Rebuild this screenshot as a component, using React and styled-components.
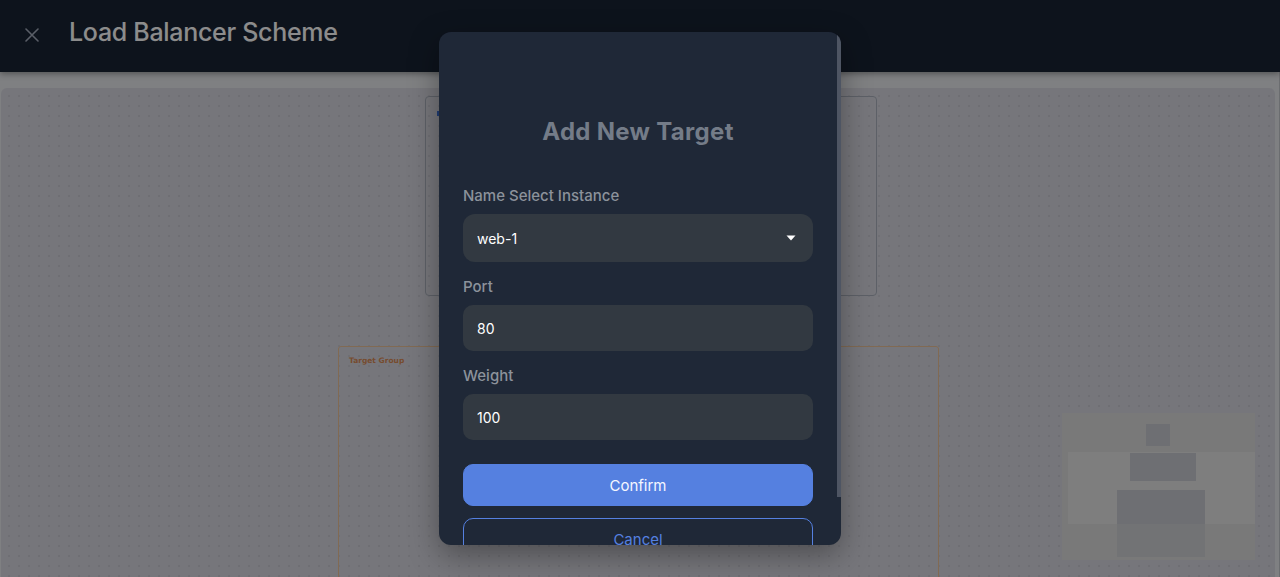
import styled, { createGlobalStyle } from 'styled-components';

const GlobalStyle = createGlobalStyle`
  html, body {
    margin: 0;
    padding: 0;
    height: 100%;
    overflow: hidden;
  }
  body {
    font-family: Inter, "Noto Sans", "Liberation Sans", sans-serif;
    background: #e7e9ed;
  }
  #root {
    height: 100%;
  }
`;

const targets = [
  { label: 'Port', value: '80' },
  { label: 'Weight', value: '100' },
];

const App = () => {
  return (
    <Page>
      <GlobalStyle />
      <Header>
        <CloseButton aria-label="close">
          <svg width="14" height="14" viewBox="0 0 14 14">
            <path d="M1 1 L13 13 M13 1 L1 13" stroke="currentColor" strokeWidth="1.6" strokeLinecap="round" />
          </svg>
        </CloseButton>
        <Title>Load Balancer Scheme</Title>
      </Header>

      <Main>
        <Canvas>
          <Node x={424} y={8} w={452} h={200}>
            <NodeMark />
          </Node>
          <Group x={337} y={258} w={601} h={260}>
            <GroupLabel>Target Group</GroupLabel>
          </Group>

          <MiniMap>
            <MiniBand />
            <MiniBox x={84} y={11} w={24} h={22} />
            <MiniBox x={68} y={40} w={66} h={28} />
            <MiniBox x={55} y={77} w={88} h={34} />
            <MiniBox x={55} y={111} w={88} h={33} light />
          </MiniMap>
        </Canvas>
      </Main>

      <Overlay>
        <Modal>
          <ModalBody>
            <ModalTitle>Add New Target</ModalTitle>

            <Field>
              <Label>Name Select Instance</Label>
              <Select>
                <span>web-1</span>
                <svg width="10" height="6" viewBox="0 0 10 6">
                  <path d="M0.5 0.5 L9.5 0.5 L5 5.5 Z" fill="#ffffff" />
                </svg>
              </Select>
            </Field>

            {targets.map((t) => (
              <Field key={t.label}>
                <Label>{t.label}</Label>
                <Input defaultValue={t.value} />
              </Field>
            ))}

            <Actions>
              <Button primary>Confirm</Button>
              <Button>Cancel</Button>
            </Actions>
          </ModalBody>
          <ScrollThumb />
        </Modal>
      </Overlay>
    </Page>
  );
};

export default App;

const Page = styled.div`
  position: relative;
  height: 100vh;
  display: flex;
  flex-direction: column;
  overflow: hidden;
`;

const Header = styled.header`
  height: 72px;
  flex-shrink: 0;
  box-sizing: border-box;
  background: #192333;
  display: flex;
  align-items: center;
  gap: 28px;
  padding: 0 23px 8px 23px;
  box-shadow: 0 2px 6px rgba(0, 0, 0, 0.35);
  position: relative;
  z-index: 1;
`;

const CloseButton = styled.button`
  background: none;
  border: none;
  padding: 0;
  width: 18px;
  height: 18px;
  display: flex;
  align-items: center;
  justify-content: center;
  color: #a4adbd;
  cursor: pointer;
  margin-top: 6px;
`;

const Title = styled.h1`
  margin: 0;
  font-size: 25px;
  font-weight: 500;
  letter-spacing: -0.3px;
  color: #ffffff;
`;

const Main = styled.main`
  flex: 1;
  padding: 16px 4px 0 1px;
  display: flex;
  border-right: 1px solid #c4c6cc;
`;

const Canvas = styled.div`
  flex: 1;
  position: relative;
  border-radius: 6px 6px 0 0;
  background-color: #d7d8e1;
  background-image: radial-gradient(circle, #cacbd4 1px, transparent 1.2px);
  background-size: 10px 10px;
  background-position: 3px 3px;
`;

const Node = styled.div`
  position: absolute;
  left: ${(p) => p.x}px;
  top: ${(p) => p.y}px;
  width: ${(p) => p.w}px;
  height: ${(p) => p.h}px;
  box-sizing: border-box;
  border: 1px solid #aab0bc;
  border-radius: 4px;
`;

const NodeMark = styled.div`
  position: absolute;
  left: 11px;
  top: 14px;
  width: 4px;
  height: 5px;
  background: #3b6fd8;
`;

const Group = styled.div`
  position: absolute;
  left: ${(p) => p.x}px;
  top: ${(p) => p.y}px;
  width: ${(p) => p.w}px;
  height: ${(p) => p.h}px;
  box-sizing: border-box;
  border: 1px solid #ecc298;
  border-radius: 3px;
  padding: 9px 10px;
`;

const GroupLabel = styled.div`
  font-family: "DejaVu Sans", sans-serif;
  font-size: 7.5px;
  font-weight: 700;
  color: #d98a55;
`;

const MiniMap = styled.div`
  position: absolute;
  right: 20px;
  bottom: 17px;
  width: 193px;
  height: 147px;
  background: #dcdcdc;
`;

const MiniBand = styled.div`
  position: absolute;
  left: 6px;
  right: 0;
  top: 39px;
  height: 72px;
  background: #e6e6e6;
`;

const MiniBox = styled.div`
  position: absolute;
  left: ${(p) => p.x}px;
  top: ${(p) => p.y}px;
  width: ${(p) => p.w}px;
  height: ${(p) => p.h}px;
  background: ${(p) => (p.light ? '#d0d1d6' : '#c8cad1')};
`;

const Overlay = styled.div`
  position: absolute;
  inset: 0;
  z-index: 10;
  background: rgba(0, 0, 0, 0.45);
  display: flex;
  align-items: center;
  justify-content: center;
`;

const Modal = styled.div`
  position: relative;
  width: 402px;
  height: calc(100vh - 64px);
  background: #1f2837;
  border-radius: 12px;
  overflow: hidden;
  box-shadow: 0 10px 30px rgba(0, 0, 0, 0.35);
`;

const ModalBody = styled.div`
  height: 100%;
  box-sizing: border-box;
  padding: 84px 28px 24px 24px;
  overflow-y: auto;
  scrollbar-width: none;

  &::-webkit-scrollbar {
    display: none;
  }
`;

const ScrollThumb = styled.div`
  position: absolute;
  top: 0;
  right: 0;
  width: 4px;
  height: 465px;
  background: #4e5563;
`;

const ModalTitle = styled.h2`
  margin: 0 0 38px 0;
  text-align: center;
  font-size: 24px;
  line-height: 32px;
  font-weight: 700;
  letter-spacing: 0.3px;
  color: #747c88;
`;

const Field = styled.div`
  display: flex;
  flex-direction: column;
  gap: 8px;
  margin-bottom: 15px;
`;

const Label = styled.label`
  font-size: 15px;
  line-height: 20px;
  font-weight: 500;
  color: #8c929b;
`;

const Select = styled.div`
  height: 48px;
  box-sizing: border-box;
  background: #323941;
  border-radius: 12px;
  padding: 0 17px 0 14px;
  display: flex;
  align-items: center;
  justify-content: space-between;
  font-size: 14px;
  color: #ffffff;
`;

const Input = styled.input`
  height: 46px;
  box-sizing: border-box;
  background: #323941;
  border: none;
  border-radius: 10px;
  padding: 0 14px;
  font-family: inherit;
  font-size: 14px;
  color: #ffffff;
  outline: none;
`;

const Actions = styled.div`
  display: flex;
  flex-direction: column;
  gap: 12px;
  margin-top: 24px;
`;

const Button = styled.button`
  height: 42px;
  border-radius: 10px;
  font-family: inherit;
  font-size: 15px;
  cursor: pointer;
  border: 1px solid #5580e0;
  background: ${(p) => (p.primary ? '#5580e0' : 'transparent')};
  color: ${(p) => (p.primary ? '#f4f7ff' : '#5580e0')};
`;
